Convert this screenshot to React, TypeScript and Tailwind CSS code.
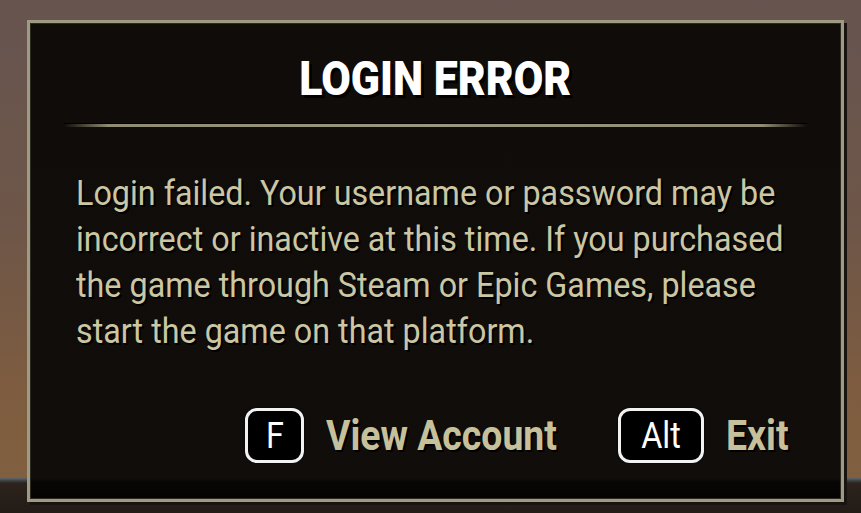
import type { ReactNode } from "react";

const body =
  "Login failed. Your username or password may be|incorrect or inactive at this time. If you purchased|the game through Steam or Epic Games, please|start the game on that platform.";

function KeyCap({ children, wide = false }: { children: ReactNode; wide?: boolean }) {
  return (
    <span
      className={`flex h-[55px] items-center justify-center rounded-[12px] border-[3px] border-[#f2f2f2] bg-black text-[36px] leading-none text-white shadow-[0_0_2px_#000] ${
        wide ? "w-[86px]" : "w-[59px]"
      }`}
    >
      <span className="inline-block scale-x-[0.9]">{children}</span>
    </span>
  );
}

function Action({ keyLabel, label, wide }: { keyLabel: string; label: string; wide?: boolean }) {
  return (
    <div className="flex items-center gap-[22px]">
      <KeyCap wide={wide}>{keyLabel}</KeyCap>
      <span
        className={`block whitespace-nowrap text-[42px] font-bold leading-none text-[#c6c19b] [text-shadow:2px_2px_0_#000] ${
          wide ? "w-[61px]" : "w-[230px]"
        }`}
      >
        <span className="inline-block origin-left scale-x-[0.89]">{label}</span>
      </span>
    </div>
  );
}

export default function App() {
  return (
    <div
      className="relative h-[513px] w-[861px] overflow-hidden bg-[linear-gradient(to_bottom,#675450_0%,#6e5648_45%,#7d5c40_75%,#80603f_93%,#566068_93.3%,#3a3a38_93.8%,#2b231c_94.2%,#231b15_100%)] pl-[27px] pt-[20px]"
      style={{ fontFamily: 'Roboto, "Liberation Sans", Arial, sans-serif' }}
    >
      <div className="flex h-[482px] w-[817px] flex-col border-[3px] border-[#9d9b82] bg-[linear-gradient(to_bottom,#100c0a_0%,#110d0b_95.6%,#070605_96.4%,#050403_100%)] shadow-[inset_0_0_0_1px_#2c2a22,3px_3px_0_#1a1410]">
        <h1 className="mt-[32px] text-center text-[48px] font-black leading-none text-white [text-shadow:3px_3px_0_#000]">
          <span className="inline-block scale-x-[0.893]">LOGIN ERROR</span>
        </h1>
        <div className="mx-[34px] mt-[20px] h-[4px] border-t border-[#000] bg-[linear-gradient(to_right,transparent_0%,#8f8c72_6%,#9a9880_50%,#8f8c72_94%,transparent_100%)]" />
        <p className="ml-[46px] mt-[44px] text-[35px] leading-[46px] text-[#cbc6a3] [text-shadow:2px_2px_0_#000]">
          {body.split("|").map((line, i) => (
            <span key={i} className="block origin-left scale-x-[0.923] whitespace-nowrap">
              {line}
            </span>
          ))}
        </p>
        <div className="mt-auto flex items-center justify-end gap-[62px] pb-[36px] pr-[54px]">
          <Action keyLabel="F" label="View Account" />
          <Action keyLabel="Alt" label="Exit" wide />
        </div>
      </div>
    </div>
  );
}
